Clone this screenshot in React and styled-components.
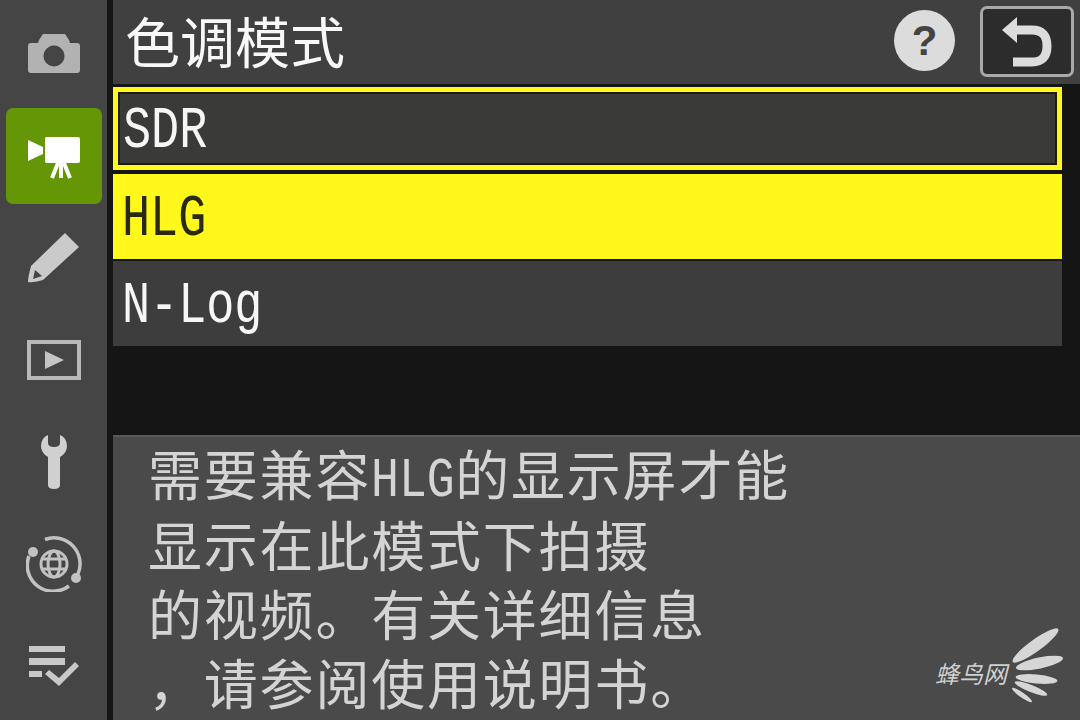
import styled, { createGlobalStyle } from "styled-components";

const Global = createGlobalStyle`
  html, body { margin: 0; padding: 0; background: #151515; }
  body { font-family: "Noto Sans CJK SC", "Liberation Sans", sans-serif; }
`;

function CameraIcon() {
  return (
    <svg width="52" height="40" viewBox="0 1 52 40">
      <path
        fillRule="evenodd"
        fill="#b2b2b2"
        d="M3 10h7l1 -3 4-6q1-1 2-1h18q1 0 2 1l4 6 1 3h7q3 0 3 3v24q0 3-3 3H3q-3 0-3-3V13q0-3 3-3zM26 12.500a10.500 10.500 0 1 0 .01 0z"
      />
    </svg>
  );
}

function MovieIcon() {
  return (
    <svg width="52" height="46" viewBox="0 -4 52 46">
      <path fill="#fff" d="M0 3l15 7v7L0 24z" />
      <rect x="17" y="0" width="35" height="26" rx="2" fill="#fff" />
      <path stroke="#fff" strokeWidth="4" d="M30 26L24 41M33 26V41M36 26L42 41" />
    </svg>
  );
}

function PencilIcon() {
  return (
    <svg width="52" height="50" viewBox="0 0 52 50">
      <path fill="#cacaca" d="M37 0l14 14-36 33Q4 50 0 49q0-5 3-16z" />
      <path fill="#454545" d="M7 37l7 6-9 3z" />
    </svg>
  );
}

function PlayIcon() {
  return (
    <svg width="54" height="40" viewBox="0 0 54 40">
      <rect x="2" y="2" width="50" height="36" fill="none" stroke="#b9b9b9" strokeWidth="4" />
      <path fill="#c4c4c4" d="M18 11l19 9-19 9z" />
    </svg>
  );
}

function WrenchIcon() {
  return (
    <svg width="26" height="54" viewBox="0 0 26 54">
      <path
        fill="#d0d0d0"
        d="M7 0v8q0 4 6 4t6-4V0q7 3 7 11 0 7-7 11v28q0 4-6 4t-6-4V22Q0 18 0 11 0 3 7 0z"
      />
    </svg>
  );
}

function NetworkIcon() {
  return (
    <svg width="56" height="56" viewBox="0 0 56 56" fill="none" stroke="#c2c2c2">
      <path strokeWidth="3.500" d="M19 3.500A26 26 0 0 1 52 38M43 50A26 26 0 0 1 3 20" />
      <circle cx="7" cy="16" r="5" fill="#c2c2c2" stroke="none" />
      <circle cx="50" cy="42" r="5" fill="#c2c2c2" stroke="none" />
      <circle cx="28" cy="28" r="13" strokeWidth="3" />
      <ellipse cx="28" cy="28" rx="6" ry="13" strokeWidth="3" />
      <path strokeWidth="3" d="M15 23h26M15 33h26" />
    </svg>
  );
}

function MyMenuIcon() {
  return (
    <svg width="50" height="40" viewBox="0 0 50 40" fill="#c8c8c8">
      <rect x="0" y="0" width="36" height="6" />
      <rect x="0" y="12" width="36" height="7" />
      <rect x="0" y="25" width="13" height="6" />
      <path d="M16 28l4-4 10 8 16-16 4 4-20 20z" />
    </svg>
  );
}

function BackIcon() {
  return (
    <svg width="50" height="50" viewBox="0 0 50 50" fill="none">
      <path d="M14 13H30Q45 13 45 29T30 45H11" stroke="#dcdcdc" strokeWidth="9" />
      <path d="M0 13L15 0v26z" fill="#dcdcdc" />
    </svg>
  );
}

function WingIcon() {
  return (
    <svg width="54" height="76" viewBox="0 0 54 76" fill="#d6d6d6">
      <ellipse cx="25.500" cy="18.500" rx="28" ry="6" transform="rotate(-36 25.500 18.500)" />
      <ellipse cx="29.500" cy="36" rx="24" ry="5.500" transform="rotate(-12 29.500 36)" />
      <ellipse cx="26.500" cy="52" rx="21" ry="4.500" transform="rotate(5.500 26.500 52)" />
      <ellipse cx="21" cy="61.500" rx="17.500" ry="3.500" transform="rotate(22 21 61.500)" />
      <ellipse cx="12" cy="68" rx="12" ry="2.500" transform="rotate(35 12 68)" />
    </svg>
  );
}

export default function App() {
  return (
    <Screen>
      <Global />
      <Sidebar>
        <NavItem><CameraIcon /></NavItem>
        <NavItem $active><MovieIcon /></NavItem>
        <NavItem><PencilIcon /></NavItem>
        <NavItem><PlayIcon /></NavItem>
        <NavItem><WrenchIcon /></NavItem>
        <NavItem><NetworkIcon /></NavItem>
        <NavItem><MyMenuIcon /></NavItem>
      </Sidebar>
      <Main>
        <Header>
          <Title>色调模式</Title>
          <HelpBadge>?</HelpBadge>
          <BackButton><BackIcon /></BackButton>
        </Header>
        <Options>
          <SelectedOption>
            <OptionLabel $chars={3}>SDR</OptionLabel>
          </SelectedOption>
          <Option $highlight>
            <OptionLabel $chars={3} $dark>HLG</OptionLabel>
          </Option>
          <Option>
            <OptionLabel $chars={5}>N-Log</OptionLabel>
          </Option>
        </Options>
        <HelpPanel>
          <HelpLine>需要兼容<HalfWidth>HLG</HalfWidth>的显示屏才能</HelpLine>
          <HelpLine>显示在此模式下拍摄</HelpLine>
          <HelpLine>的视频。有关详细信息</HelpLine>
          <HelpLine>，请参阅使用说明书。</HelpLine>
          <Watermark>
            <WatermarkText>蜂鸟网</WatermarkText>
            <WingIcon />
          </Watermark>
        </HelpPanel>
      </Main>
    </Screen>
  );
}

const Screen = styled.div`
  width: 1080px;
  height: 720px;
  display: flex;
  overflow: hidden;
  background: #151515;
`;

const Sidebar = styled.nav`
  width: 107px;
  height: 720px;
  flex: none;
  box-sizing: border-box;
  padding: 6px 5px 0 6px;
  display: flex;
  flex-direction: column;
  background: #454545;
  margin-right: 6px;
`;

const NavItem = styled.div`
  height: 96px;
  flex: none;
  margin-bottom: 6px;
  display: flex;
  align-items: center;
  justify-content: center;
  border-radius: 7px;
  background: ${({ $active }) => ($active ? "#659606" : "transparent")};
`;

const Main = styled.main`
  flex: 1;
  display: flex;
  flex-direction: column;
  min-width: 0;
`;

const Header = styled.header`
  height: 84px;
  flex: none;
  box-sizing: border-box;
  padding: 6px 6px 0 12px;
  display: flex;
  align-items: flex-start;
  background: #404040;
`;

const Title = styled.h1`
  flex: 1;
  margin: -3px 0 0;
  font-size: 55px;
  line-height: 72px;
  font-weight: 400;
  color: #f8f8f8;
`;

const HelpBadge = styled.div`
  width: 61px;
  height: 61px;
  margin: 4px 25px 0 0;
  border-radius: 50%;
  display: flex;
  align-items: center;
  justify-content: center;
  background: #dcdcdc;
  color: #444;
  font-family: "Liberation Sans", sans-serif;
  font-size: 42px;
  font-weight: 700;
`;

const BackButton = styled.div`
  width: 94px;
  height: 71px;
  box-sizing: border-box;
  border: 3px solid #a9a9a9;
  border-radius: 7px;
  background: #2c2c2c;
  display: flex;
  align-items: center;
  justify-content: center;
`;

const Options = styled.div`
  width: 949px;
  height: 351px;
  flex: none;
  padding-top: 3px;
  box-sizing: border-box;
  display: flex;
  flex-direction: column;
`;

const Option = styled.div`
  height: 85px;
  flex: none;
  margin-top: 2px;
  padding: 4px 0 0 9px;
  box-sizing: border-box;
  display: flex;
  align-items: center;
  background: ${({ $highlight }) => ($highlight ? "#fff81a" : "#3d3d3d")};
`;

const SelectedOption = styled.div`
  height: 83px;
  flex: none;
  margin-bottom: 2px;
  padding: 5px 0 0 5px;
  box-sizing: border-box;
  display: flex;
  align-items: center;
  background: #3a3a38;
  border: 5px solid #fff81a;
  outline: 2px solid #1c1c10;
  outline-offset: -7px;
`;

/* the camera draws latin text at half the width of a CJK cell */
const OptionLabel = styled.span`
  display: inline-block;
  width: ${({ $chars }) => $chars * 28}px;
  font-family: "Liberation Mono", monospace;
  font-size: 60px;
  line-height: 1;
  white-space: pre;
  transform: scaleX(0.78);
  transform-origin: left center;
  color: ${({ $dark }) => ($dark ? "#2a2a10" : "#f6f6f6")};
`;

const HelpPanel = styled.section`
  position: relative;
  flex: 1;
  box-sizing: border-box;
  padding: 1px 0 0 35px;
  background: #4a4a4a;
  border-top: 2px solid #5a5a5a;
`;

const HelpLine = styled.div`
  font-size: 54px;
  line-height: 69px;
  letter-spacing: 1.800px;
  color: #d4d4d4;
  white-space: pre;
`;

const HalfWidth = styled.span`
  display: inline-block;
  width: 84px;
  font-family: "Liberation Mono", monospace;
  font-size: 56px;
  letter-spacing: 0;
  line-height: 1;
  transform: scaleX(0.83);
  transform-origin: left center;
`;

const Watermark = styled.div`
  position: absolute;
  right: 16px;
  bottom: 17px;
  display: flex;
  align-items: center;
  gap: 3px;
`;

const WatermarkText = styled.span`
  font-size: 24px;
  font-style: italic;
  color: #d0d0d0;
  margin-top: 14px;
`;
